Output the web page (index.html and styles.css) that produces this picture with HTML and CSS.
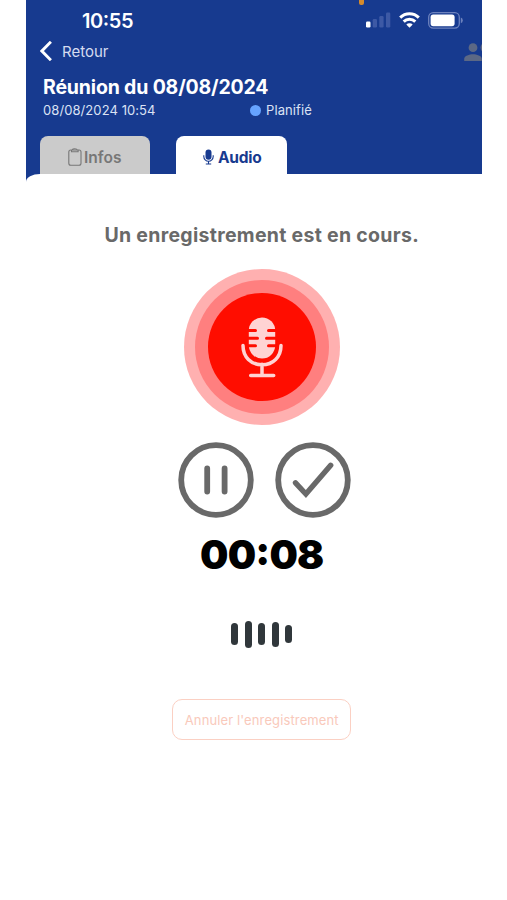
FILE: index.html
```html
<!DOCTYPE html>
<html lang="fr">
<head>
    <meta charset="UTF-8">
    <meta name="viewport" content="width=device-width, initial-scale=1.0">
    <title>Réunion</title>
    <link rel="stylesheet" href="styles.css">
</head>
<body>
    <div class="phone">
        <header class="header">
            <span class="mic-indicator"></span>
            <div class="status-bar">
                <span class="clock">10:55</span>
                <div class="status-icons">
                    <svg class="signal" width="25" height="16" viewBox="0 0 25 16">
                        <rect x="0" y="9.5" width="4.5" height="6" rx="1.2" fill="#fff"/>
                        <g fill="#3d59a5">
                            <rect x="6.7" y="7" width="4.3" height="8.5" rx="1.2"/>
                            <rect x="13.3" y="4" width="4.3" height="11.5" rx="1.2"/>
                            <rect x="20" y="0.5" width="4.3" height="15" rx="1.2"/>
                        </g>
                    </svg>
                    <svg class="wifi" width="21" height="16" viewBox="0 0 21 16">
                        <g fill="none" stroke="#fff" stroke-width="3">
                            <path d="M1.2 5.6a13.2 13.2 0 0 1 18.6 0"/>
                            <path d="M4.7 9.6a8.2 8.2 0 0 1 11.6 0"/>
                        </g>
                        <path d="M10.5 15.7L7.3 12.6a4.6 4.6 0 0 1 6.4 0z" fill="#fff"/>
                    </svg>
                    <svg class="battery" width="35" height="17" viewBox="0 0 35 17">
                        <rect x="0.7" y="0.7" width="30.6" height="15.4" rx="4.5" fill="none" stroke="#6d82bd" stroke-width="1.3"/>
                        <rect x="2.6" y="2.6" width="24" height="11.6" rx="2.6" fill="#fff"/>
                        <path d="M32.8 5.6q2 .8 2 2.8t-2 2.8z" fill="#6d82bd"/>
                    </svg>
                </div>
            </div>
            <div class="nav">
                <a class="back">
                    <svg width="12" height="20" viewBox="0 0 12 20">
                        <path d="M10.9 0.8L1.9 10l9 9.2" fill="none" stroke="#fff" stroke-width="2.9"/>
                    </svg>
                    <span>Retour</span>
                </a>
                <svg class="people" width="18" height="18" viewBox="0 0 18 18" fill="#5c6885">
                    <circle cx="9" cy="4.7" r="4.4"/>
                    <path d="M0.2 18v-2.2C0.2 12.8 5.4 11.3 9 11.3S17.8 12.8 17.8 15.8V18z"/>
                    <path d="M18 0.8q-3 3.9 0 7.6z"/>
                </svg>
            </div>
            <h1 class="title">Réunion du 08/08/2024</h1>
            <div class="meta">
                <span class="date">08/08/2024 10:54</span>
                <span class="dot"></span>
                <span class="state">Planifié</span>
            </div>
            <div class="tabs">
                <div class="tab">
                    <svg width="14" height="18" viewBox="0 0 14 18" fill="none" stroke="#777" stroke-width="1.1">
                        <rect x="0.8" y="2" width="12.2" height="15.2" rx="2"/>
                        <path d="M3.5 2v1.8h6.6V2M4.5 2q0-1.2 2.3-1.2T9.1 2"/>
                    </svg>
                    <span>Infos</span>
                </div>
                <div class="tab tab-active">
                    <svg width="11" height="16" viewBox="0 0 11 16">
                        <rect x="2.5" y="0.5" width="6" height="10.3" rx="3" fill="#173a8f"/>
                        <path d="M0.8 6.3v1.2a4.7 4.7 0 0 0 9.4 0V6.3M5.5 12v3M2.8 15h5.4" fill="none" stroke="#173a8f" stroke-width="1.1"/>
                    </svg>
                    <span>Audio</span>
                </div>
            </div>
        </header>
        <main class="content">
            <p class="message">Un enregistrement est en cours.</p>
            <div class="record">
                <div class="record-ring">
                    <div class="record-core">
                        <svg width="42" height="61" viewBox="0 0 42 61">
                            <rect x="7.8" y="0.5" width="26.4" height="41" rx="13.2" fill="#ffd3d3"/>
                            <path d="M6 13.6h8.5M6 21.2h10.5M6 28.8h8.5M36 13.6h-8.5M36 21.2H25.5M36 28.8h-8.5" stroke="#ff0d00" stroke-width="3" stroke-linecap="round"/>
                            <path d="M2 28.5c0 11.5 8 19.3 19 19.3s19-7.8 19-19.3M21 47.3v11M9.7 58.5h23" fill="none" stroke="#ffd3d3" stroke-width="3.5" stroke-linecap="round"/>
                        </svg>
                    </div>
                </div>
            </div>
            <div class="controls">
                <svg width="76" height="76" viewBox="0 0 76 76" fill="none" stroke="#696969">
                    <circle cx="38" cy="38" r="34.8" stroke-width="5.8"/>
                    <path d="M29.2 26.5v23M46.6 26.5v23" stroke-width="5.8" stroke-linecap="round"/>
                </svg>
                <svg width="76" height="76" viewBox="0 0 76 76" fill="none" stroke="#696969">
                    <circle cx="38" cy="38" r="34.8" stroke-width="5.8"/>
                    <path d="M20.5 40.8L30.9 52L55.7 23.3" stroke-width="5.4" stroke-linecap="round"/>
                </svg>
            </div>
            <div class="timer">00:08</div>
            <div class="wave">
                <span class="bar bar-medium"></span>
                <span class="bar bar-tall"></span>
                <span class="bar bar-medium"></span>
                <span class="bar bar-high"></span>
                <span class="bar bar-short"></span>
            </div>
            <button class="cancel">Annuler l'enregistrement</button>
        </main>
    </div>
</body>
</html>
```
FILE: styles.css
```css
* {
    box-sizing: border-box;
}

body {
    margin: 0;
    background-color: #fff;
    font-family: Inter, "Liberation Sans", sans-serif;
}

.phone {
    width: 455.5px;
    height: 900px;
    margin-left: 26px;
    overflow: hidden;
}

.header {
    position: relative;
    height: 182px;
    background-color: #173a8f;
    color: #fff;
}

/* Orange dot shown while the microphone is in use */
.mic-indicator {
    position: absolute;
    top: 0;
    left: 333px;
    width: 5px;
    height: 5px;
    border-radius: 0 0 2px 2px;
    background-color: #d58a2b;
}

.status-bar {
    display: flex;
    justify-content: space-between;
    align-items: center;
    height: 40px;
    padding: 0 19px 0 56px;
}

.clock {
    padding-top: 1px;
    font-size: 20px;
    font-weight: 600;
    letter-spacing: -0.4px;
    font-feature-settings: "case";
}

.status-icons {
    display: flex;
    align-items: center;
    gap: 8px;
}

.nav {
    display: flex;
    justify-content: space-between;
    align-items: center;
    height: 22px;
    padding-left: 14px;
}

.people {
    margin-top: 2px;
}

.back {
    display: flex;
    align-items: center;
    gap: 10px;
    font-size: 15px;
    color: #d5dcf0;
}

.title {
    margin: 13px 0 0 17px;
    font-size: 19.5px;
    line-height: 25px;
    font-weight: 700;
    letter-spacing: -0.17px;
}

.meta {
    display: flex;
    align-items: center;
    height: 20px;
    padding-left: 17px;
    font-size: 13px;
    color: #dbe2f4;
}

.date {
    width: 207px;
    letter-spacing: 0.08px;
}

.dot {
    width: 11px;
    height: 11px;
    margin-right: 5px;
    border-radius: 50%;
    background-color: #66a3ff;
}

.state {
    margin-top: -1px;
    letter-spacing: 0.1px;
}

.tabs {
    display: flex;
    gap: 26px;
    padding: 16px 0 0 13.5px;
}

.tab {
    display: flex;
    justify-content: center;
    align-items: center;
    gap: 2px;
    width: 110.5px;
    height: 42px;
    border-radius: 8px 8px 0 0;
    background-color: #cbcbcb;
    color: #777;
    font-size: 15.5px;
    font-weight: 600;
}

.tab-active {
    gap: 4px;
    padding-left: 2px;
    background-color: #fff;
    color: #173a8f;
    font-weight: 700;
    letter-spacing: -0.2px;
}

.content {
    position: relative;
    display: flex;
    flex-direction: column;
    align-items: center;
    height: 726px;
    margin-top: -8px;
    padding-left: 16px;
    border-top-left-radius: 14px 8px;
    background-color: #fff;
}

.message {
    margin: 48px 0 0;
    font-size: 19.5px;
    line-height: 26px;
    font-weight: 700;
    letter-spacing: 0.29px;
    color: #696969;
}

.record,
.record-ring,
.record-core {
    display: flex;
    justify-content: center;
    align-items: center;
    border-radius: 50%;
}

.record {
    width: 156px;
    height: 156px;
    margin-top: 21px;
    background-color: #ffb0b0;
}

.record-ring {
    width: 134px;
    height: 134px;
    background-color: #ff7f7f;
}

.record-core {
    width: 108px;
    height: 108px;
    background-color: #ff0d00;
}

.controls {
    display: flex;
    gap: 21px;
    margin-top: 17px;
    padding-left: 5px;
}

.timer {
    margin-top: 16px;
    font-size: 40px;
    line-height: 42px;
    font-weight: 900;
    letter-spacing: -0.8px;
    font-feature-settings: "case";
    color: #000;
}

.wave {
    display: flex;
    align-items: center;
    gap: 6.5px;
    height: 28px;
    margin-top: 44px;
}

.bar {
    width: 7px;
    border-radius: 4px;
    background-color: #30373b;
}

.bar-short {
    height: 18px;
}

.bar-medium {
    height: 22px;
}

.bar-high {
    height: 25px;
}

.bar-tall {
    height: 27px;
}

.cancel {
    width: 179px;
    height: 41px;
    margin-top: 51px;
    padding: 0;
    border: 1.5px solid #fbd0c3;
    border-radius: 10px;
    background-color: #fff;
    color: #f9c9bb;
    font-family: inherit;
    font-size: 13px;
    letter-spacing: 0.12px;
    white-space: nowrap;
}
```
